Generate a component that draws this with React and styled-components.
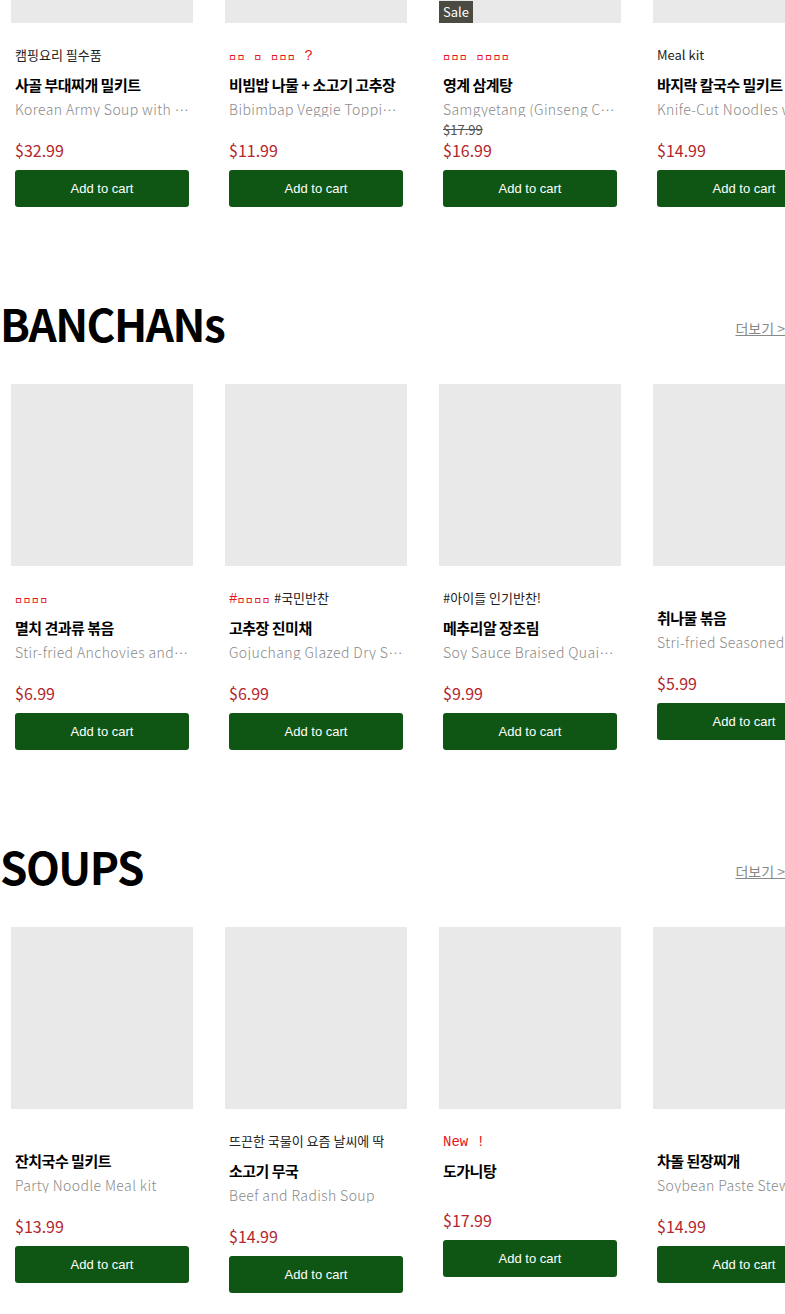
import React from 'react';
import styled, { createGlobalStyle } from 'styled-components';

const GlobalStyle = createGlobalStyle`
  html, body {
    margin: 0;
    padding: 0;
    background: #ffffff;
    overflow-x: hidden;
  }
  body {
    font-family: "Noto Sans CJK KR", "Noto Sans", sans-serif;
    color: #111;
  }
`;

const Page = styled.div`
  width: 785px;
  padding-bottom: 40px;
`;

const Section = styled.section`
  margin-top: ${p => (p.first ? '-159px' : '85px')};
`;

const HeadRow = styled.div`
  display: flex;
  justify-content: space-between;
  align-items: center;
  height: 60px;
  margin-bottom: 32px;
`;

const Heading = styled.h2`
  margin: 0;
  font-size: 44px;
  line-height: 60px;
  font-weight: 700;
  color: #000;
  letter-spacing: -1.5px;
  padding-top: 2px;
`;

const MoreLink = styled.a`
  margin-top: 12px;
  font-size: 14px;
  color: #888;
  text-decoration: underline;
  cursor: pointer;
`;

const Row = styled.div`
  display: flex;
  align-items: flex-start;
  gap: 32px;
  padding-left: 11px;
`;

const Card = styled.div`
  width: 182px;
  flex-shrink: 0;
  display: flex;
  flex-direction: column;
`;

const Thumb = styled.div`
  position: relative;
  width: 182px;
  height: 182px;
  background: #e9e9e9;
`;

const SaleBadge = styled.span`
  position: absolute;
  left: 0;
  bottom: 0;
  height: 22px;
  padding: 0 4px;
  background: #4b4b42;
  color: #fff;
  font-size: 13px;
  line-height: 22px;
`;

const Body = styled.div`
  padding: 22px 4px 0;
  display: flex;
  flex-direction: column;
`;

const Tag = styled.div`
  height: 20px;
  margin-bottom: 8px;
  font-size: 13px;
  line-height: 20px;
  white-space: nowrap;
  color: #222;
`;

const NoTag = styled.div`
  height: 18px;
`;

const Mono = styled.span`
  font-family: "Liberation Mono", "DejaVu Sans Mono", monospace;
  font-size: 14px;
  color: #e8141c;
`;

const Title = styled.div`
  font-size: 15px;
  font-weight: 700;
  line-height: 24px;
  margin-bottom: 4px;
  color: #000;
  letter-spacing: -0.5px;
  white-space: nowrap;
`;

const Desc = styled.div`
  font-size: 14px;
  font-weight: 300;
  line-height: 16px;
  color: #8a8a8a;
  letter-spacing: 0.4px;
  white-space: nowrap;
  overflow: hidden;
  text-overflow: ellipsis;
`;

const OldPrice = styled.div`
  margin-top: 5px;
  height: 16px;
  font-size: 13px;
  line-height: 16px;
  color: #555;
  text-decoration: line-through;
`;

const Price = styled.div`
  font-size: 16px;
  line-height: 24px;
  color: #b3262b;
  margin-bottom: 8px;
`;

const CartBtn = styled.button`
  width: 174px;
  height: 37px;
  border: none;
  border-radius: 3px;
  background: #0f5614;
  color: #fff;
  font-family: "Liberation Sans", Arial, sans-serif;
  font-size: 13px;
  cursor: pointer;
`;

const B = '\uE000';

const sections = [
  {
    first: true,
    items: [
      { tag: [{ t: '캠핑요리 필수품' }], title: '사골 부대찌개 밀키트', desc: 'Korean Army Soup with Beef Bone Broth Meal kit', price: '$32.99' },
      { tag: [{ t: `${B}${B} ${B} ${B}${B}${B} ?`, mono: true }], title: '비빔밥 나물 + 소고기 고추장', desc: 'Bibimbap Veggie Toppings + Beef Gochujang', price: '$11.99' },
      { sale: true, tag: [{ t: `${B}${B}${B} ${B}${B}${B}${B}`, mono: true }], title: '영계 삼계탕', desc: 'Samgyetang (Ginseng Chicken Soup)', was: '$17.99', price: '$16.99' },
      { tag: [{ t: 'Meal kit' }], title: '바지락 칼국수 밀키트', desc: 'Knife-Cut Noodles with Clam Meal kit', price: '$14.99' },
    ],
  },
  {
    name: 'BANCHANs',
    items: [
      { tag: [{ t: `${B}${B}${B}${B}`, mono: true }], title: '멸치 견과류 볶음', desc: 'Stir-fried Anchovies and Nuts', price: '$6.99' },
      { tag: [{ t: `#${B}${B}${B}${B}`, mono: true }, { t: ' #국민반찬' }], title: '고추장 진미채', desc: 'Gojuchang Glazed Dry Shredded Squid', price: '$6.99' },
      { tag: [{ t: '#아이들 인기반찬!' }], title: '메추리알 장조림', desc: 'Soy Sauce Braised Quail Eggs', price: '$9.99' },
      { title: '취나물 볶음', desc: 'Stri-fried Seasoned Aster Scaber', price: '$5.99' },
    ],
  },
  {
    name: 'SOUPS',
    items: [
      { title: '잔치국수 밀키트', desc: 'Party Noodle Meal kit', price: '$13.99' },
      { tag: [{ t: '뜨끈한 국물이 요즘 날씨에 딱' }], title: '소고기 무국', desc: 'Beef and Radish Soup', price: '$14.99' },
      { tag: [{ t: 'New !', mono: true }], title: '도가니탕', price: '$17.99' },
      { title: '차돌 된장찌개', desc: 'Soybean Paste Stew with Brisket', price: '$14.99' },
    ],
  },
];

const ProductCard = ({ item }) => (
  <Card>
    <Thumb>{item.sale && <SaleBadge>Sale</SaleBadge>}</Thumb>
    <Body>
      {item.tag ? (
        <Tag>
          {item.tag.map((p, i) =>
            p.mono ? <Mono key={i}>{p.t}</Mono> : <span key={i}>{p.t}</span>
          )}
        </Tag>
      ) : (
        <NoTag />
      )}
      <Title>{item.title}</Title>
      {item.desc && <Desc>{item.desc}</Desc>}
      <OldPrice>{item.was}</OldPrice>
      <Price>{item.price}</Price>
      <CartBtn>Add to cart</CartBtn>
    </Body>
  </Card>
);

export default function App() {
  return (
    <Page>
      <GlobalStyle />
      {sections.map((s, i) => (
        <Section key={i} first={s.first}>
          {s.name && (
            <HeadRow>
              <Heading>{s.name}</Heading>
              <MoreLink>더보기 &gt;</MoreLink>
            </HeadRow>
          )}
          <Row>
            {s.items.map((it, j) => (
              <ProductCard key={j} item={it} />
            ))}
          </Row>
        </Section>
      ))}
    </Page>
  );
}
